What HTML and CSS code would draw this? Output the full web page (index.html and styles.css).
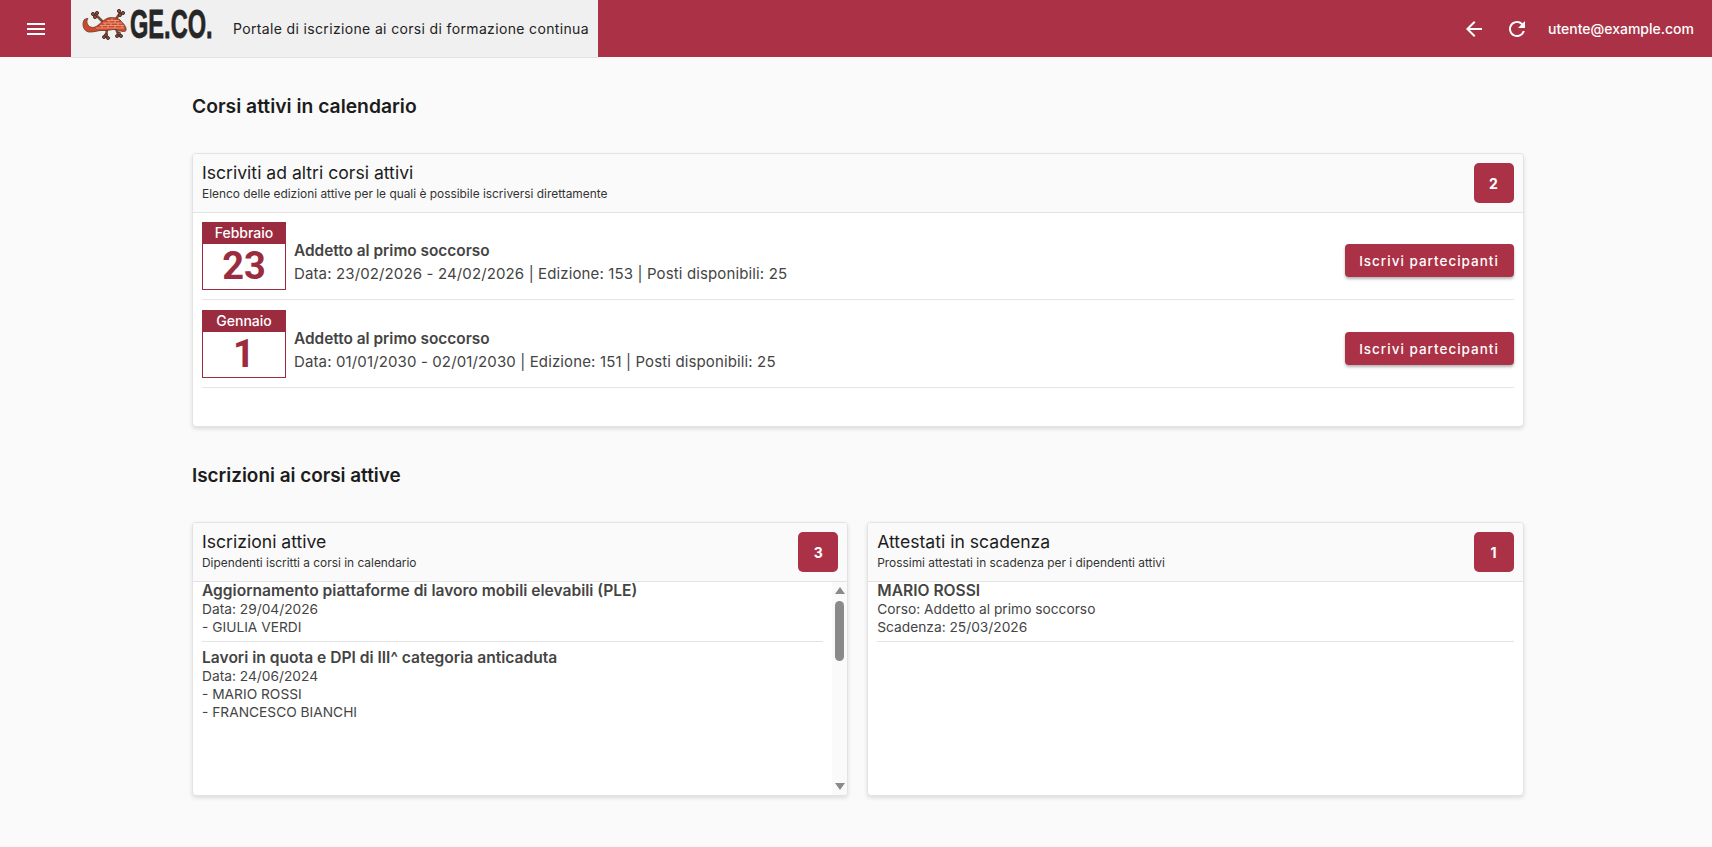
FILE: index.html
```html
<!DOCTYPE html>
<html lang="it">
<head>
<meta charset="utf-8">
<title>GE.CO.</title>
<link rel="stylesheet" href="styles.css">
</head>
<body>
<header class="topbar">
  <button class="menu-btn" aria-label="menu">
    <svg width="24" height="24" viewBox="0 0 24 24"><path d="M3 18h18v-2H3v2zm0-5h18v-2H3v2zm0-7v2h18V6H3z" fill="#fff"/></svg>
  </button>
  <div class="brand">
    <svg class="gecko" width="52" height="36" viewBox="0 0 52 36">
      <g fill="none" stroke="#7a4a3a" stroke-width="2.500" stroke-linecap="round">
        <path d="M23 15 L17 9 M37 13 L41 7 M28 23 L27 31 M37 23 L40 30"/>
      </g>
      <path d="M5 14 C2 20 6 27 12 26 C16 26 20 24 24 24.500 C29 25 33 23 37 23.500 C40 25 46 26.500 47 24.500 C48 21 44 17 41 14 C37 11 30 11 27 13 C23 15 21 18 18 20 C15 22 11 22 9 19 C7.500 17 7.500 14 9 12.500 C7 12.500 6 13 5 14Z" fill="#cf4a2a" stroke="#5e3a2e" stroke-width=".8"/>
      <g stroke="#f4c4ae" stroke-width=".6" fill="none"><path d="M28 14.500h12M24 17h19M21 19.500h24M17 22h28M33 12v2.500M30 14.500v2.500M36 14.500v2.500M26 17v2.500M32 17v2.500M39 17v2.500M23 19.500v2.500M29 19.500v2.500M36 19.500v2.500M43 19.500v2.500"/></g>
      <g fill="#a8472e" stroke="#3f3531" stroke-width="1">
        <circle cx="14" cy="8" r="1.600"/><circle cx="18" cy="7" r="1.600"/><circle cx="16" cy="11" r="1.600"/>
        <circle cx="40" cy="5" r="1.600"/><circle cx="44" cy="7" r="1.600"/><circle cx="41" cy="9" r="1.600"/>
        <circle cx="25" cy="31" r="1.500"/><circle cx="29" cy="32" r="1.500"/><circle cx="27" cy="29" r="1.500"/>
        <circle cx="38" cy="30" r="1.500"/><circle cx="42" cy="30" r="1.500"/><circle cx="40" cy="27.500" r="1.500"/>
      </g>
    </svg>
    <span class="logo-box"><span class="logo-word">GE.CO.</span></span>
    <span class="portal-title">Portale di iscrizione ai corsi di formazione continua</span>
  </div>
  <div class="top-actions">
    <svg width="24" height="24" viewBox="0 0 24 24"><path d="M20 11H7.830l5.590-5.590L12 4l-8 8 8 8 1.410-1.410L7.830 13H20v-2z" fill="#fff"/></svg>
    <svg width="24" height="24" viewBox="0 0 24 24"><path d="M17.650 6.350A7.958 7.958 0 0 0 12 4c-4.420 0-7.990 3.580-7.990 8s3.570 8 7.990 8c3.730 0 6.840-2.550 7.730-6h-2.080A5.990 5.990 0 0 1 12 18c-3.310 0-6-2.690-6-6s2.690-6 6-6c1.660 0 3.140.690 4.220 1.780L13 11h7V4l-2.350 2.350z" fill="#fff"/></svg>
    <span class="user">utente@example.com</span>
  </div>
</header>

<main class="content">
  <h2 class="section-title">Corsi attivi in calendario</h2>
  <section class="card card-courses">
    <div class="card-head">
      <div class="head-text">
        <h3>Iscriviti ad altri corsi attivi</h3>
        <p>Elenco delle edizioni attive per le quali è possibile iscriversi direttamente</p>
      </div>
      <span class="badge">2</span>
    </div>
    <div class="card-body">
      <div class="course">
        <div class="cal"><div class="cal-month">Febbraio</div><div class="cal-day">23</div></div>
        <div class="course-info">
          <div class="course-name">Addetto al primo soccorso</div>
          <div class="course-meta">Data: 23/02/2026 - 24/02/2026 | Edizione: 153 | Posti disponibili: 25</div>
        </div>
        <button class="btn">Iscrivi partecipanti</button>
      </div>
      <div class="course">
        <div class="cal"><div class="cal-month">Gennaio</div><div class="cal-day">1</div></div>
        <div class="course-info">
          <div class="course-name">Addetto al primo soccorso</div>
          <div class="course-meta">Data: 01/01/2030 - 02/01/2030 | Edizione: 151 | Posti disponibili: 25</div>
        </div>
        <button class="btn">Iscrivi partecipanti</button>
      </div>
    </div>
  </section>

  <h2 class="section-title second">Iscrizioni ai corsi attive</h2>
  <div class="two-cols">
    <section class="card card-list">
      <div class="card-head">
        <div class="head-text">
          <h3>Iscrizioni attive</h3>
          <p>Dipendenti iscritti a corsi in calendario</p>
        </div>
        <span class="badge">3</span>
      </div>
      <div class="list-wrap">
        <div class="list">
          <div class="entry">
            <div class="entry-title">Aggiornamento piattaforme di lavoro mobili elevabili (PLE)</div>
            <div class="entry-line">Data: 29/04/2026</div>
            <div class="entry-line">- GIULIA VERDI</div>
          </div>
          <div class="entry">
            <div class="entry-title">Lavori in quota e DPI di III^ categoria anticaduta</div>
            <div class="entry-line">Data: 24/06/2024</div>
            <div class="entry-line">- MARIO ROSSI</div>
            <div class="entry-line">- FRANCESCO BIANCHI</div>
          </div>
        </div>
        <div class="scrollbar">
          <span class="arrow-up"></span>
          <span class="thumb"></span>
          <span class="arrow-down"></span>
        </div>
      </div>
    </section>
    <section class="card card-list">
      <div class="card-head">
        <div class="head-text">
          <h3>Attestati in scadenza</h3>
          <p>Prossimi attestati in scadenza per i dipendenti attivi</p>
        </div>
        <span class="badge">1</span>
      </div>
      <div class="list-wrap">
        <div class="list">
          <div class="entry">
            <div class="entry-title">MARIO ROSSI</div>
            <div class="entry-line">Corso: Addetto al primo soccorso</div>
            <div class="entry-line">Scadenza: 25/03/2026</div>
          </div>
        </div>
      </div>
    </section>
  </div>
</main>
</body>
</html>
```
FILE: styles.css
```css
* { box-sizing: border-box; }
html, body { margin: 0; height: 100%; }
body {
  background: #fafafa;
  font-family: Inter, "Open Sans", sans-serif;
  color: #222;
  overflow: hidden;
}
h2, h3, p { margin: 0; }

.topbar {
  display: flex;
  align-items: center;
  height: 57px;
  background: #ab3246;
  color: #fff;
}
.menu-btn {
  width: 71px;
  height: 57px;
  padding: 0;
  background: none;
  border: 0;
  display: flex;
  align-items: center;
  justify-content: center;
}
.brand {
  width: 527px;
  height: 58px;
  background: #f0f0f0;
  border-bottom: 1px solid #e2e2e2;
  display: flex;
  align-items: center;
  padding-left: 8px;
  color: #222;
  align-self: flex-start;
}
.gecko { flex: none; align-self: flex-start; margin-top: 6px; }
.logo-box {
  display: block;
  flex: none;
  width: 82px;
  height: 40px;
  margin-left: -1px;
  margin-top: -9px;
}
.logo-word {
  display: block;
  font-family: "Liberation Sans", sans-serif;
  font-weight: 700;
  font-size: 40px;
  line-height: 40px;
  color: #262626;
  -webkit-text-stroke: .8px #262626;
  white-space: nowrap;
  transform: scaleX(.59);
  transform-origin: left center;
}
.portal-title {
  font-size: 14px;
  margin-left: 21px;
  white-space: nowrap;
  letter-spacing: .35px;
}
.top-actions {
  margin-left: auto;
  display: flex;
  align-items: center;
  gap: 19px;
  padding-right: 18px;
}
.user { font-size: 14px; font-weight: 500; }

.content {
  width: 1335px;
  margin: 0 auto;
  padding-left: 3.500px;
}
.section-title {
  font-size: 19.300px;
  font-weight: 600;
  line-height: 24px;
  color: #1c1c1c;
  padding-top: 37px;
  margin-bottom: 35px;
}
.section-title.second { padding-top: 37px; margin-bottom: 34px; font-size: 18.900px; }

.card {
  background: #fff;
  border: 1px solid #e3e3e3;
  border-radius: 4px;
  box-shadow: 0 2px 4px rgba(0,0,0,.12);
  overflow: hidden;
}
.card-courses { height: 274px; }
.card-head {
  height: 59px;
  background: #fafafa;
  border-bottom: 1px solid #e3e3e3;
  display: flex;
  align-items: center;
  justify-content: space-between;
  padding: 0 9px;
}
.head-text { padding-bottom: 3px; }
.card-head h3 { font-size: 17.600px; font-weight: 400; line-height: 22px; color: #1c1c1c; }
.card-head p { font-size: 11.900px; line-height: 16px; margin-top: 2px; color: #333; }
.badge {
  width: 40px;
  height: 40px;
  border-radius: 5px;
  background: #ab3246;
  color: #fff;
  font-size: 14px;
  font-weight: 700;
  display: flex;
  align-items: center;
  justify-content: center;
}

.card-body { padding: 9px 9px 0; }
.course {
  display: flex;
  align-items: center;
  gap: 8px;
  height: 78px;
  margin-bottom: 10px;
  border-bottom: 1px solid #e6e6e6;
}
.cal {
  width: 84px;
  height: 68px;
  align-self: flex-start;
  border: 1px solid #9b2c40;
  display: flex;
  flex-direction: column;
  background: #fff;
}
.cal-month {
  height: 22px;
  background: #9b2c40;
  color: #fff;
  font-size: 14px;
  font-weight: 500;
  text-align: center;
  line-height: 20px;
}
.cal-day {
  flex: 1;
  color: #9b2c40;
  font-family: Roboto, sans-serif;
  font-size: 38px;
  font-weight: 700;
  text-align: center;
  line-height: 45px;
}
.course-info { flex: 1; color: #444; padding-top: 4px; }
.course-name { font-size: 15.400px; font-weight: 600; line-height: 22px; }
.course-meta { font-size: 15px; letter-spacing: .13px; line-height: 22px; margin-top: 1px; }
.btn {
  width: 169px;
  height: 33px;
  border: 0;
  border-radius: 4px;
  background: #ab3246;
  color: #fff;
  font-family: inherit;
  font-size: 13.500px;
  font-weight: 500;
  letter-spacing: 1px;
  box-shadow: 0 2px 3px rgba(0,0,0,.3);
}

.two-cols {
  display: grid;
  grid-template-columns: 1fr 1fr;
  gap: 19px;
}
.card-list { height: 274px; display: flex; flex-direction: column; }
.list-wrap { flex: 1; display: flex; min-height: 0; }
.list { flex: 1; padding: 0 9px; min-width: 0; margin-top: -1px; }
.entry {
  padding-bottom: 5px;
  margin-bottom: 6px;
  border-bottom: 1px solid #e3e3e3;
}
.entry:last-child { border-bottom: 0; }
.list .entry:only-child { border-bottom: 1px solid #e3e3e3; }
.entry-title { font-size: 15.600px; font-weight: 600; line-height: 19px; color: #444; }
.entry-line { font-size: 13.750px; line-height: 18px; color: #444; }

.scrollbar {
  width: 15px;
  flex: none;
  background: #fafafa;
  display: flex;
  flex-direction: column;
  align-items: center;
  position: relative;
}
.arrow-up, .arrow-down {
  width: 0; height: 0;
  border-left: 5px solid transparent;
  border-right: 5px solid transparent;
}
.arrow-up { border-bottom: 7px solid #8a8a8a; margin-top: 5px; }
.arrow-down { border-top: 7px solid #8a8a8a; margin-top: auto; margin-bottom: 5px; }
.thumb {
  width: 9px;
  height: 60px;
  margin-top: 7px;
  border-radius: 5px;
  background: #8a8a8a;
}
```
